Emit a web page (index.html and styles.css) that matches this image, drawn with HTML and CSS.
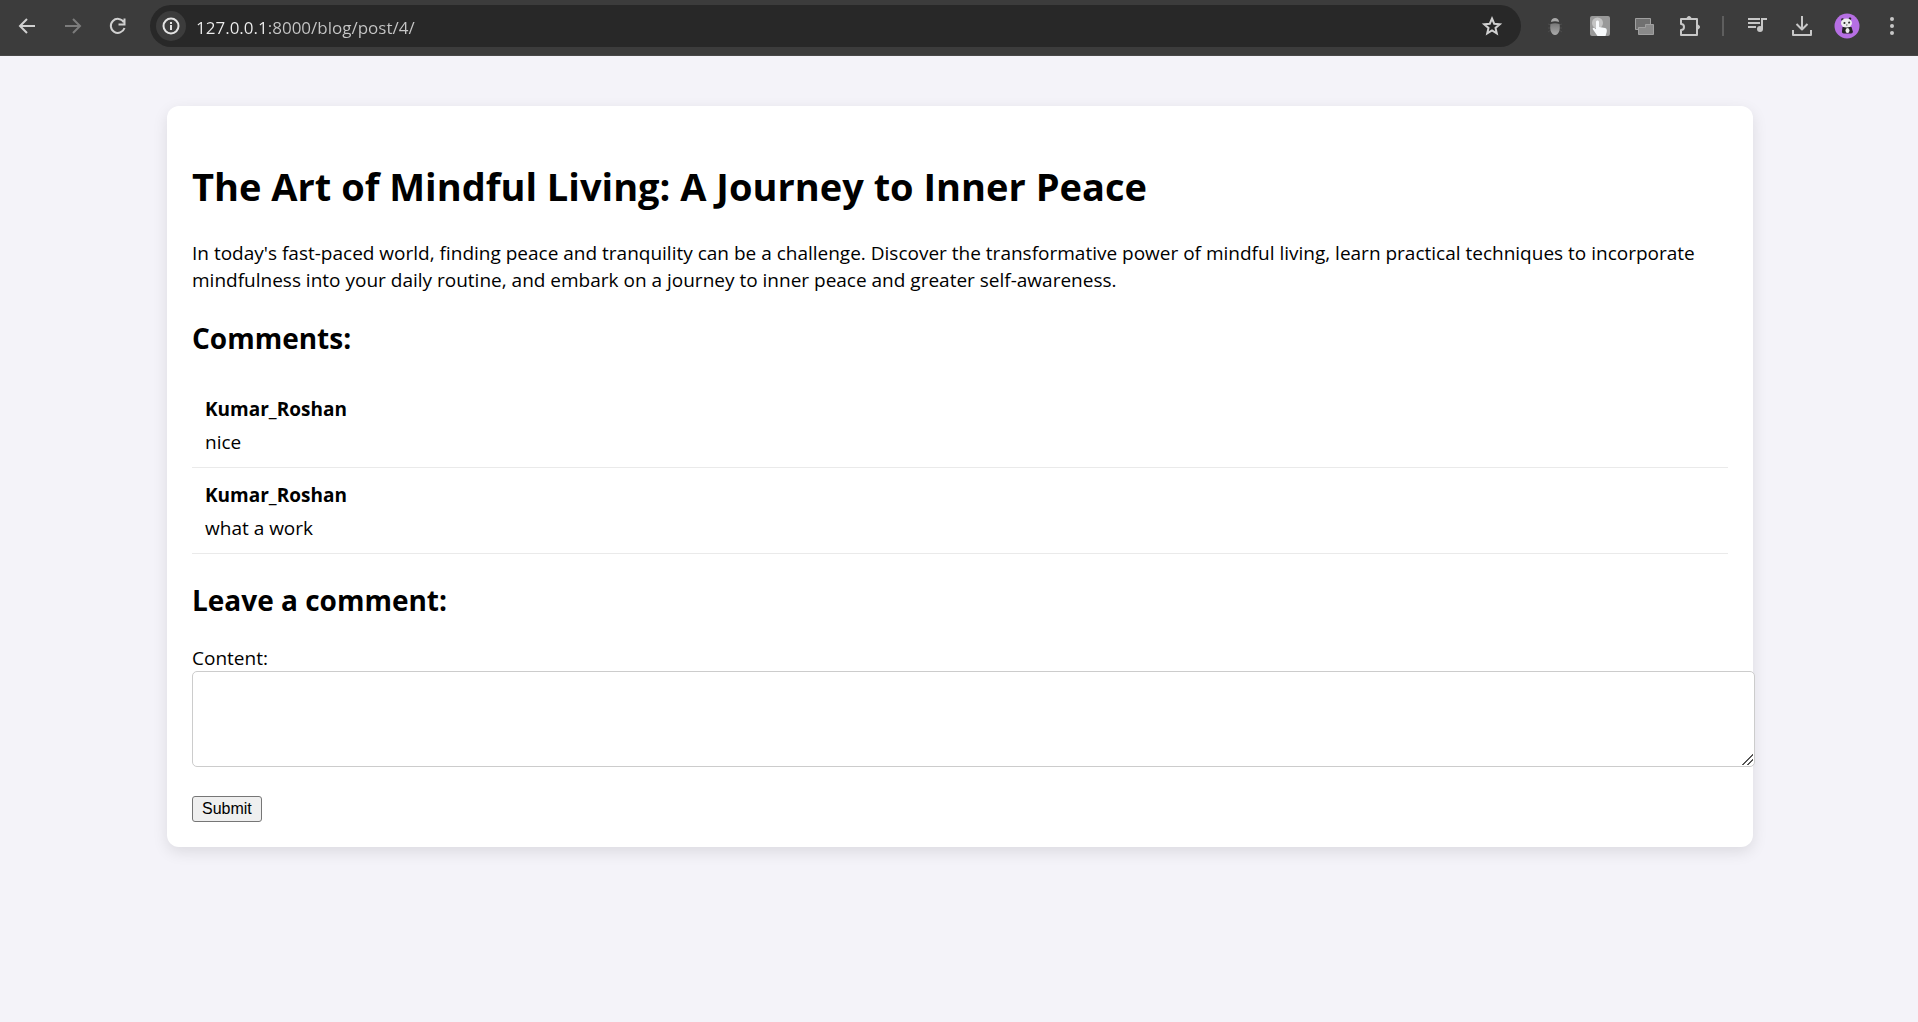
FILE: index.html
```
<!DOCTYPE html>
<html lang="en">
<head>
<meta charset="utf-8">
<meta name="viewport" content="width=device-width, initial-scale=1">
<title>The Art of Mindful Living</title>
<link rel="stylesheet" href="styles.css">
</head>
<body>
<header class="toolbar">
  <nav class="tools" aria-label="Navigation">
    <button class="tool" aria-label="Back"><svg width="24" height="24" viewBox="0 0 24 24" fill="none" stroke="#d0d0d0" stroke-width="2"><path d="M20 12H6M12 5l-7 7 7 7"/></svg></button>
    <button class="tool" aria-label="Forward" disabled><svg width="24" height="24" viewBox="0 0 24 24" fill="none" stroke="#7c7c7c" stroke-width="2"><path d="M5 12h14M13 5l7 7-7 7"/></svg></button>
    <button class="tool" aria-label="Reload"><svg width="24" height="24" viewBox="0 0 24 24" fill="none" stroke="#d0d0d0" stroke-width="2"><path d="M18.8 8.200A7 7 0 1 0 19.500 14M19.500 4.500V10.500H13.500"/></svg></button>
  </nav>
  <form class="address">
    <button type="button" class="site-info" aria-label="Site information"><svg width="20" height="20" viewBox="0 0 20 20" fill="none" stroke="#e3e3e3" stroke-width="2"><circle cx="10" cy="10" r="7.500"/><path d="M10 9v5M10 6v2"/></svg></button>
    <input class="url" type="text" aria-label="Address" value="127.0.0.1:8000/blog/post/4/">
    <button type="button" class="tool" aria-label="Bookmark"><svg width="24" height="24" viewBox="0 0 24 24" fill="none" stroke="#d0d0d0" stroke-width="2"><path d="M12 4.500l2.200 5.200 5.600.5-4.300 3.700 1.300 5.500-4.800-2.900-4.800 2.900 1.300-5.500-4.300-3.700 5.600-.5z"/></svg></button>
  </form>
  <div class="tools">
    <button class="tool" aria-label="Debugger extension"><svg width="24" height="24" viewBox="0 0 24 24"><defs><linearGradient id="bug" x2="0" y2="1"><stop stop-color="#777"/><stop offset="1" stop-color="#aaa"/></linearGradient></defs><path d="M5 10l3 1M5 14h3M5 18l3-2M19 10l-3 1M19 14h-3M19 18l-3-2" stroke="#4c4c4c"/><path d="M8 8c0-5.500 8-5.500 8 0q-4-1.500-8 0z" fill="#a8a8a8"/><path d="M7.500 10q4.500-1.500 9 0c1 5-.5 11-4.500 11s-5.500-6-4.500-11z" fill="url(#bug)"/></svg></button>
    <button class="tool" aria-label="Click extension"><svg width="24" height="24" viewBox="0 0 24 24"><rect x="2" y="2" width="20" height="20" rx="2" fill="#999"/><circle cx="9.500" cy="9" r="5.500" fill="#c4c4c4"/><path d="M8 8c0-2 3-2 3 0v5l6 1c2 .5 2 2 1.700 4l-1.200 4H9.500L5 15.500c-1-1.500.7-2.500 2-1l1 .8z" fill="#f7f9fb"/></svg></button>
    <button class="tool" aria-label="Window extension"><svg width="24" height="24" viewBox="0 0 24 24" stroke="#a0a0a0"><path d="M2.500 4.500h15v11h-15z" fill="#707070"/><path d="M5.500 13.500v7h15v-10h-8v3z" fill="#8a8a8a"/></svg></button>
    <button class="tool" aria-label="Extensions"><svg width="24" height="24" viewBox="0 0 24 24" fill="none" stroke="#c7c7c7" stroke-width="2"><path d="M3 5h16v16H3v-5c4 0 4-6 0-6z" stroke-linejoin="round"/><path d="M9 4.500a2 2 0 0 1 4 0zM19.500 11a2 2 0 0 1 0 4z" fill="#c7c7c7" stroke-width="1"/></svg></button>
    <span class="divider"></span>
    <button class="tool" aria-label="Media controls"><svg width="24" height="24" viewBox="0 0 24 24" fill="none" stroke="#c7c7c7" stroke-width="2"><path d="M3 5h12M3 9h12M3 13h8M17 15V5h5"/><circle cx="15" cy="15" r="3" fill="#c7c7c7" stroke="none"/></svg></button>
    <button class="tool" aria-label="Downloads"><svg width="24" height="24" viewBox="0 0 24 24" fill="none" stroke="#c7c7c7" stroke-width="2"><path d="M12 2v13M6.500 10l5.500 5.500 5.500-5.500M3 16v5h18v-5" stroke-linejoin="round"/></svg></button>
    <button class="tool" aria-label="Profile"><svg width="26" height="26" viewBox="0 0 26 26"><circle cx="13" cy="13" r="12.500" fill="#b66fe3"/><path d="M8.500 14h9l1.500 5q-1 2-3 1.500h-6Q7.500 20 8 18z" fill="#242424"/><circle cx="8.500" cy="6.500" r="1.300" fill="#242424"/><circle cx="16" cy="5.800" r="1.300" fill="#242424"/><ellipse cx="12.500" cy="10" rx="5.500" ry="4.500" fill="#eee"/><path d="M9.500 10l1.500-.8v1.500zM14.500 9l1.500 0-1 1.500zM12 12h1.500" fill="#222" stroke="#222" stroke-width=".7"/><ellipse cx="13.500" cy="17.500" rx="2" ry="2.500" fill="#eee"/></svg></button>
    <button class="tool" aria-label="Menu"><svg width="24" height="24" viewBox="0 0 24 24" fill="#c7c7c7"><circle cx="12" cy="5" r="2"/><circle cx="12" cy="12" r="2"/><circle cx="12" cy="19" r="2"/></svg></button>
  </div>
</header>
<main class="post">
  <h1 class="post-title">The Art of Mindful Living: A Journey to Inner Peace</h1>
  <p class="post-body">In today's fast-paced world, finding peace and tranquility can be a challenge. Discover the transformative power of mindful living, learn practical techniques to incorporate mindfulness into your daily routine, and embark on a journey to inner peace and greater self-awareness.</p>
  <h2 class="section-title">Comments:</h2>
  <ul class="comments">
    <li class="comment"><strong>Kumar_Roshan</strong><span>nice</span></li>
    <li class="comment"><strong>Kumar_Roshan</strong><span>what a work</span></li>
  </ul>
  <h2 class="section-title">Leave a comment:</h2>
  <form class="comment-form">
    <label class="content-label" for="content">Content:</label>
    <textarea class="content" id="content" name="content"></textarea>
    <button type="submit" class="submit">Submit</button>
  </form>
</main>
</body>
</html>
```
FILE: styles.css
```
* { box-sizing: border-box; }

body {
  margin: 0;
  min-height: 100vh;
  background: #f4f3f9;
  color: #000;
  font: 19px/27px "Segoe UI", "Open Sans", "Noto Sans", sans-serif;
}

/* Browser toolbar */
.toolbar {
  display: flex;
  align-items: flex-start;
  gap: 11px;
  height: 56px;
  padding: 5px 4px 0;
  background: #3c3c3c;
  border-bottom: 1px solid #484848;
}
.tools { display: flex; align-items: center; height: 42px; }
.tool {
  display: grid;
  place-items: center;
  width: 45px;
  height: 42px;
  padding: 0;
  border: 0;
  background: none;
}
.tool svg, .site-info svg { display: block; }
.divider {
  width: 2px;
  height: 20px;
  margin: 0 10px;
  background: #5e5e5e;
}
.address {
  display: flex;
  align-items: center;
  flex: 1;
  height: 42px;
  padding: 0 7px 0 6px;
  border-radius: 21px;
  background: #282828;
}
.site-info {
  display: grid;
  place-items: center;
  width: 30px;
  height: 30px;
  padding: 0;
  border: 0;
  border-radius: 50%;
  background: #3c3c3c;
}
.url {
  flex: 1;
  min-width: 0;
  height: 32px;
  margin-left: 10px;
  padding: 2px 0 0;
  border: 0;
  outline: 0;
  /* the host is brighter than the path */
  background: linear-gradient(90deg, #eee 72px, #c7c7c7 72px);
  background-clip: text;
  -webkit-background-clip: text;
  color: #eee;
  -webkit-text-fill-color: transparent;
  font: 17px/30px "Segoe UI", "Open Sans", "Noto Sans", sans-serif;
}

/* Post card */
.post {
  margin: 50px 165px 50px 167px;
  padding: 25px;
  border-radius: 12px;
  background: #fff;
  box-shadow: 0 5px 15px rgba(0, 0, 0, .1);
}
.post-title { margin: 29px 0 27px; font-size: 38px; line-height: 53px; }
.post-body { margin: 0; }
.section-title { margin: 24px 0; font-size: 28px; line-height: 40px; }
.comments { margin: 0 0 26px; padding: 0; list-style: none; }
.comment {
  display: flex;
  flex-direction: column;
  gap: 6px;
  padding: 14px 13px 11px;
  border-bottom: 1px solid #eaeaea;
}
.comment-form {
  display: flex;
  flex-direction: column;
  align-items: flex-start;
}
.content-label { padding-top: 2px; line-height: 25px; }
.content {
  width: calc(100% + 27px);
  height: 96px;
  margin-bottom: 29px;
  padding: 12px;
  border: 1px solid #ccc;
  border-radius: 5px;
  background: #fff;
  font: 17px "Liberation Mono", monospace;
  resize: vertical;
}
.content::-webkit-resizer {
  background: linear-gradient(135deg, transparent 46%, #555 46%, #555 55%, transparent 55%, transparent 69%, #555 69%, #555 78%, transparent 78%) 3px 3px / 11px 11px no-repeat;
}
.submit {
  height: 26px;
  padding: 0 9px;
  border: 1px solid #767676;
  border-radius: 3px;
  background: #efefef;
  color: #000;
  font: 16px "Liberation Sans", Arial, sans-serif;
}
```
